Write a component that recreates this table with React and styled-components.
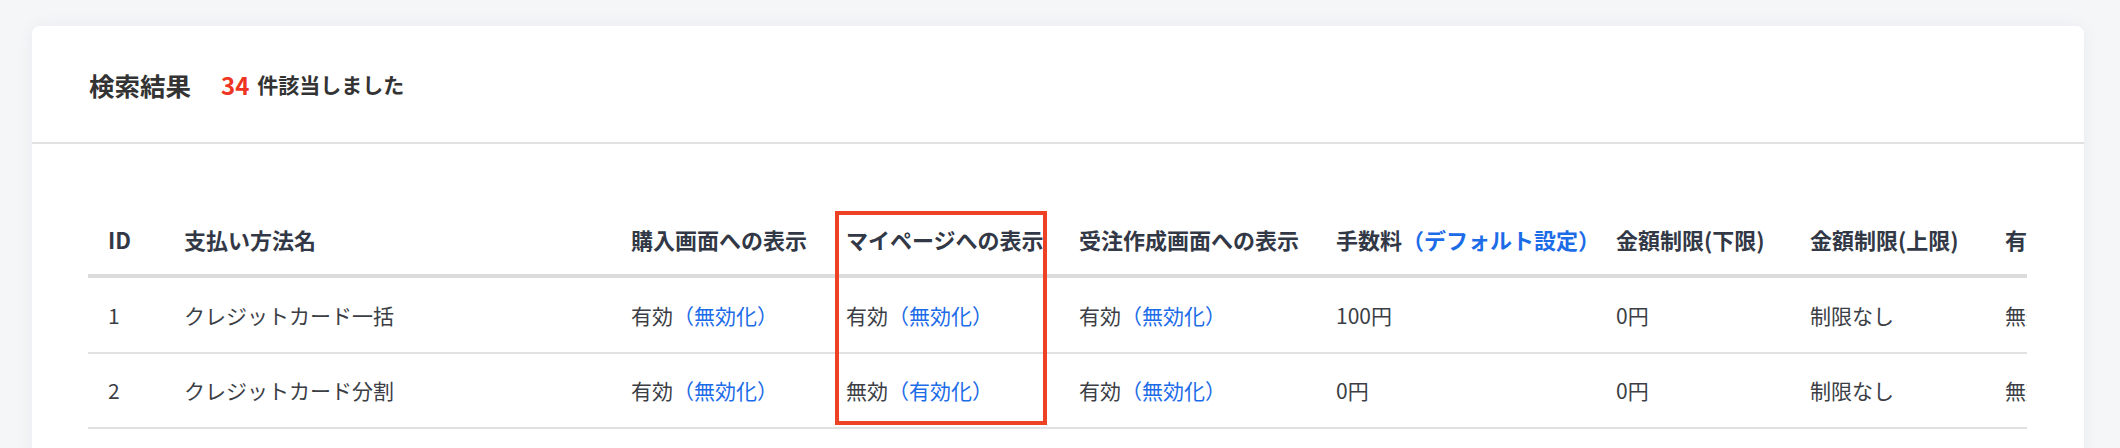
import React from 'react'
import styled, { createGlobalStyle } from 'styled-components'

const FONT = `"Noto Sans CJK JP", "Noto Sans", sans-serif`

const GlobalStyle = createGlobalStyle`
  html, body {
    margin: 0;
    padding: 0;
    background: #f5f6f8;
    font-family: ${FONT};
  }
`

const Page = styled.div`
  height: 448px;
  overflow: hidden;
  padding: 26px 36px 0 32px;
  box-sizing: border-box;
`

const Card = styled.section`
  background: #fff;
  border-radius: 8px 8px 0 0;
  box-shadow: 0 0 18px rgba(30, 40, 60, 0.05);
  min-height: 600px;
`

const CardHeader = styled.header`
  height: 118px;
  box-sizing: border-box;
  padding-left: 57px;
  display: flex;
  align-items: center;
  border-bottom: 2px solid #e1e1e1;
  color: #333;
  font-weight: 700;
`

const Title = styled.h2`
  margin: 0 30px 0 0;
  font-size: 25.5px;
  font-weight: 700;
`

const Count = styled.span`
  color: #ee3522;
  font-size: 24px;
  margin-right: 8px;
`

const CountLabel = styled.span`
  font-size: 21px;
`

const CardBody = styled.div`
  padding: 59px 57px 0 56px;
`

const TableWrap = styled.div`
  position: relative;
  overflow: hidden;
`

const Table = styled.table`
  border-collapse: collapse;
  table-layout: fixed;
  width: 2097px;
  font-size: 21px;
`

const Th = styled.th`
  box-sizing: border-box;
  width: ${({ w }) => w}px;
  height: 73px;
  padding: 0 0 0 20px;
  text-align: left;
  font-size: 22px;
  font-weight: 700;
  color: #323846;
  white-space: nowrap;
  border-bottom: 4px solid #dcdcdc;
`

const Td = styled.td`
  height: 73.5px;
  padding: 0 0 0 20px;
  color: #3b3e45;
  white-space: nowrap;
  border-bottom: 2px solid #e1e1e1;
`

const Link = styled.a`
  color: #1c6ce8;
  text-decoration: none;
  cursor: pointer;
`

const Highlight = styled.div`
  position: absolute;
  left: ${({ left }) => left}px;
  top: 8px;
  width: 212px;
  height: 214px;
  box-sizing: border-box;
  border: 4px solid #ee4224;
  pointer-events: none;
`

const columns = [
  { key: 'id', label: 'ID', w: 76 },
  { key: 'name', label: '支払い方法名', w: 447 },
  { key: 'purchase', label: '購入画面への表示', w: 215 },
  { key: 'mypage', label: 'マイページへの表示', w: 233 },
  { key: 'order', label: '受注作成画面への表示', w: 257 },
  { key: 'fee', label: '手数料', link: '（デフォルト設定）', w: 280 },
  { key: 'min', label: '金額制限(下限)', w: 194 },
  { key: 'max', label: '金額制限(上限)', w: 195 },
  { key: 'status', label: '有効状態', w: 200 },
]

const rows = [
  { id: 1, name: 'クレジットカード一括', purchase: true, mypage: true, order: true, fee: '100円', min: '0円', max: '制限なし', status: '無効' },
  { id: 2, name: 'クレジットカード分割', purchase: true, mypage: false, order: true, fee: '0円', min: '0円', max: '制限なし', status: '無効' },
]

const Toggle = ({ on }) => (
  <>
    {on ? '有効' : '無効'}
    <Link>{on ? '（無効化）' : '（有効化）'}</Link>
  </>
)

// box sits 9px inside the マイページ column
const highlightLeft = columns.slice(0, 3).reduce((s, c) => s + c.w, 0) + 9

const App = () => (
  <Page>
    <GlobalStyle />
    <Card>
      <CardHeader>
        <Title>検索結果</Title>
        <Count>34</Count>
        <CountLabel>件該当しました</CountLabel>
      </CardHeader>
      <CardBody>
        <TableWrap>
          <Table>
            <thead>
              <tr>
                {columns.map(c => (
                  <Th key={c.key} w={c.w}>
                    {c.label}
                    {c.link && <Link>{c.link}</Link>}
                  </Th>
                ))}
              </tr>
            </thead>
            <tbody>
              {rows.map(r => (
                <tr key={r.id}>
                  <Td>{r.id}</Td>
                  <Td>{r.name}</Td>
                  <Td><Toggle on={r.purchase} /></Td>
                  <Td><Toggle on={r.mypage} /></Td>
                  <Td><Toggle on={r.order} /></Td>
                  <Td>{r.fee}</Td>
                  <Td>{r.min}</Td>
                  <Td>{r.max}</Td>
                  <Td>{r.status}</Td>
                </tr>
              ))}
            </tbody>
          </Table>
          <Highlight left={highlightLeft} />
        </TableWrap>
      </CardBody>
    </Card>
  </Page>
)

export default App
